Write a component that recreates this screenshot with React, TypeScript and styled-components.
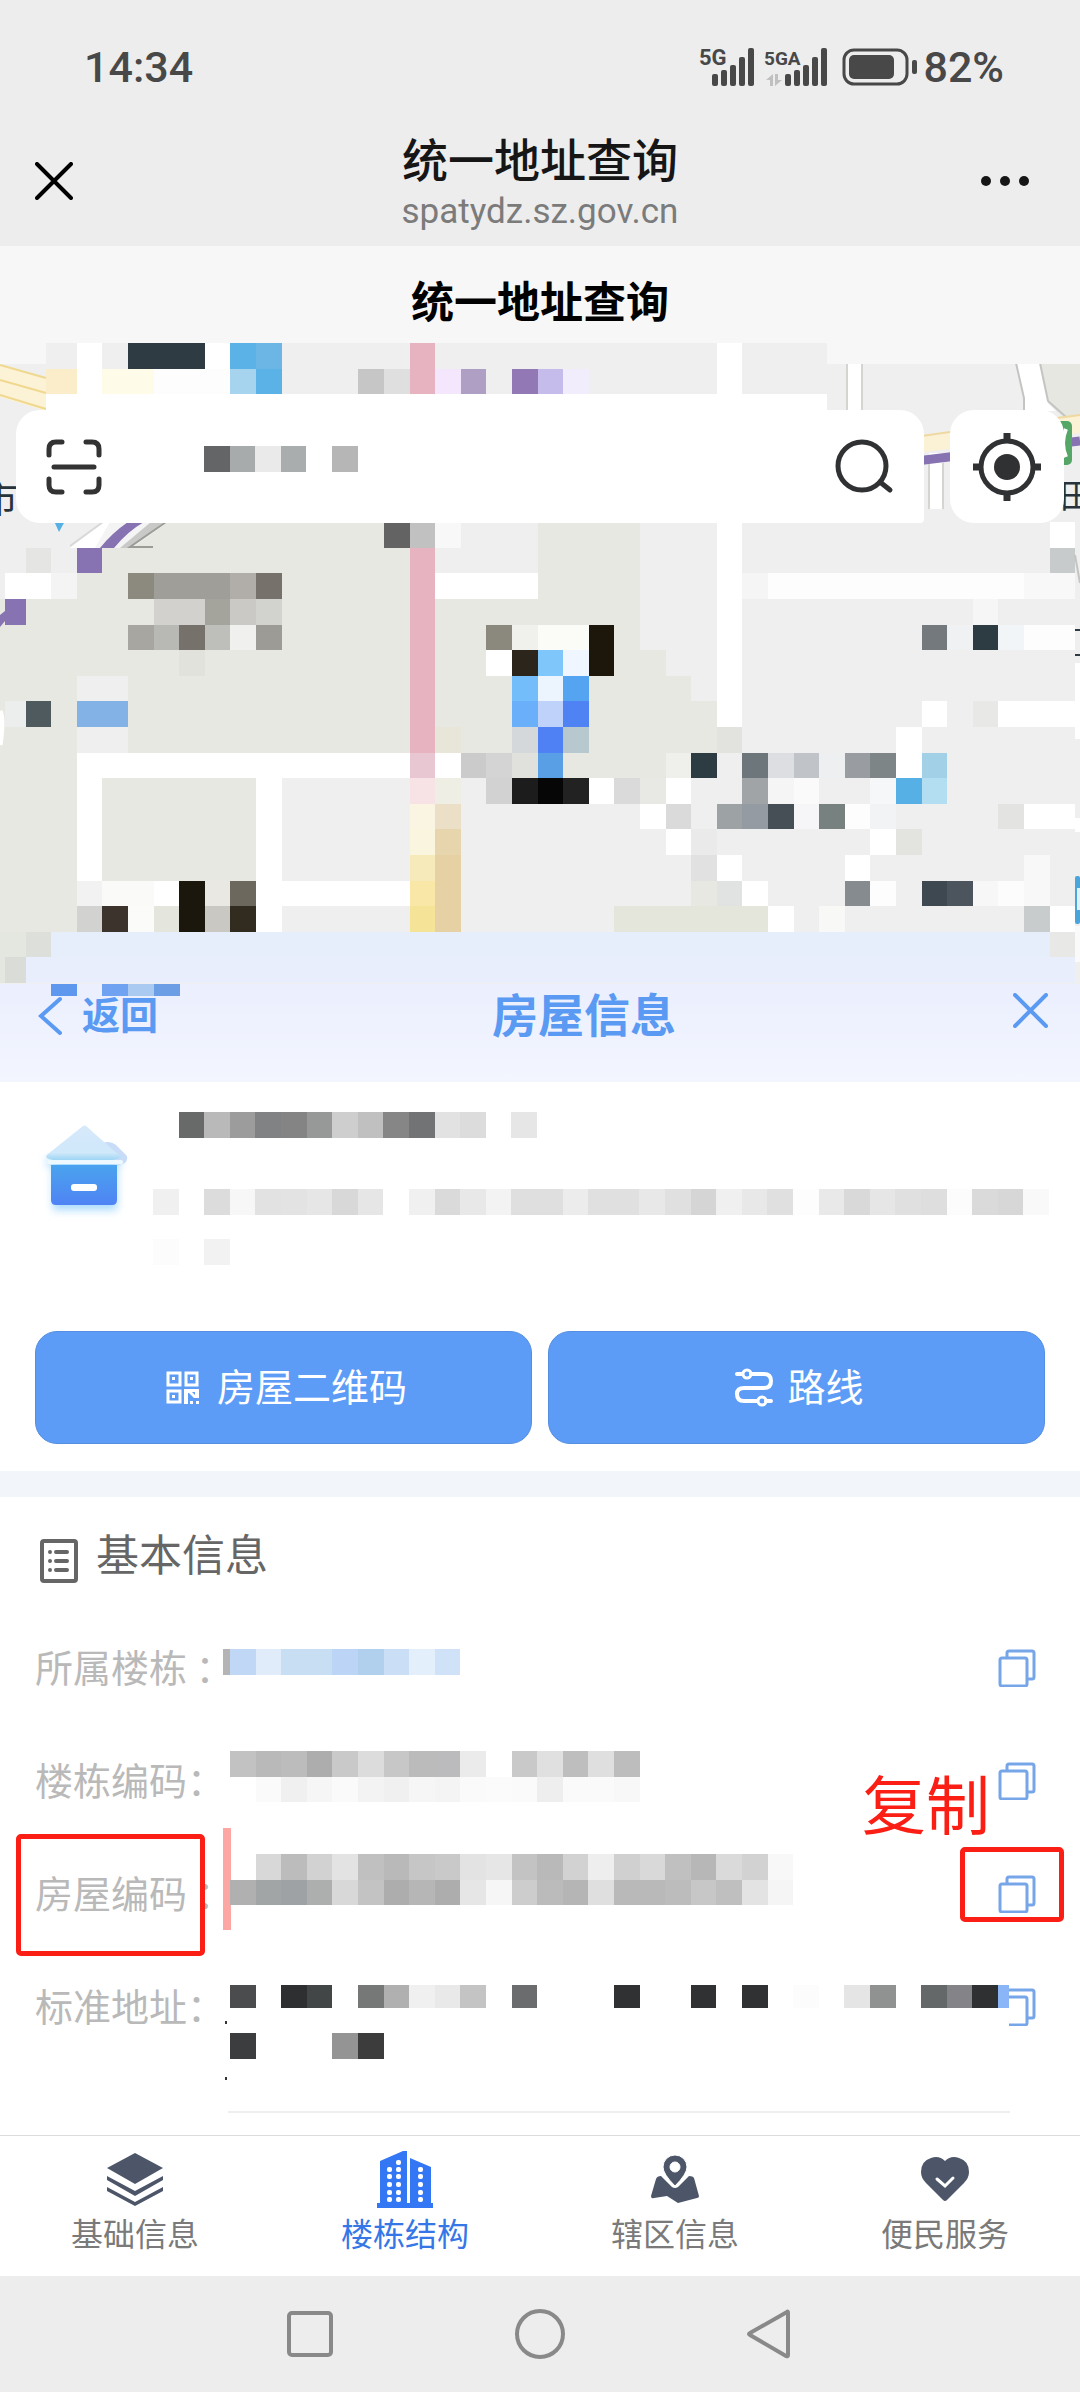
import React from "react";
import styled, { createGlobalStyle } from "styled-components";

const CELL = 25.6;

const GlobalStyle = createGlobalStyle`
  * { box-sizing: border-box; }
  body {
    margin: 0;
    background: #ffffff;
    font-family: "Noto Sans CJK SC", "Noto Sans", sans-serif;
  }
  button { font-family: inherit; padding: 0; border: 0; background: none; cursor: pointer; }
  svg { display: block; }
`;

const Page = styled.div`
  display: flex;
  flex-direction: column;
  min-height: 100vh;
  overflow-x: hidden;
`;

/* ---------- status bar and browser header ---------- */

const StatusBar = styled.div`
  display: flex;
  align-items: center;
  justify-content: space-between;
  height: 134px;
  padding: 0 76px 0 84px;
  background: #ededed;
  color: #484848;
  font: 500 43px/50px Roboto, "Noto Sans", sans-serif;
`;

const StatusRight = styled.div`
  display: flex;
  align-items: center;
  gap: 6px;
`;

const BrowserHeader = styled.header`
  display: flex;
  align-items: flex-start;
  justify-content: space-between;
  height: 112px;
  padding: 0 35px;
  background: #ededed;
`;

const HeaderButton = styled.button`
  display: flex;
  align-items: center;
  width: 66px;
  height: 94px;
`;

const HeaderTitles = styled.div`
  display: flex;
  flex-direction: column;
  align-items: center;
`;

const BrowserTitle = styled.h1`
  margin: 0;
  color: #161616;
  font-size: 46px;
  font-weight: 500;
  line-height: 46px;
`;

const BrowserUrl = styled.span`
  color: #7b7b7b;
  font: 400 35px/64px Roboto, "Noto Sans", sans-serif;
`;

const PageTitle = styled.h2`
  margin: 0;
  padding: 23px 0 14px;
  background: #f7f7f7;
  color: #000000;
  font-size: 43px;
  font-weight: 700;
  line-height: 60px;
  text-align: center;
`;

/* ---------- map ---------- */

const MapStage = styled.section`
  position: relative;
`;

const MapDrawing = styled.svg`
  width: 100%;
  height: auto;
`;

const MapControls = styled.div`
  position: absolute;
  top: 67px;
  left: 16px;
  right: 16px;
  display: flex;
  gap: 26px;
`;

const SearchBox = styled.div`
  display: flex;
  flex: 1;
  align-items: center;
  min-width: 0;
  height: 113px;
  padding: 0 30px;
  border-radius: 24px 24px 4px 24px;
  background: #ffffff;
`;

const SearchValue = styled.div`
  flex-shrink: 0;
  width: 154px;
  height: 42px;
  margin-left: 102px;
`;

const SearchInput = styled.input`
  flex: 1;
  min-width: 0;
  height: 80px;
  border: 0;
  outline: 0;
  background: transparent;
  font-size: 38px;
`;

const LocateButton = styled.button`
  display: flex;
  flex-shrink: 0;
  align-items: center;
  justify-content: center;
  width: 114px;
  height: 113px;
  border-radius: 24px;
  background: #ffffff;
`;

/* ---------- sheet ---------- */

const SheetHead = styled.div`
  position: relative;
  display: flex;
  align-items: flex-start;
  justify-content: space-between;
  height: 98px;
  padding: 0 32px 0 38px;
  background: linear-gradient(#ebeffe, #f3f6ff);
  color: #5b9af2;
`;

const SheetTitle = styled.h3`
  position: absolute;
  left: 0;
  right: 0;
  margin: 0;
  padding-left: 88px;
  font-size: 46px;
  font-weight: 700;
  line-height: 56px;
  text-align: center;
  pointer-events: none;
`;

const BackButton = styled.button`
  display: flex;
  align-items: flex-start;
  gap: 20px;
  color: inherit;
  font-size: 38px;
  font-weight: 700;
  line-height: 58px;
`;

const BackArrow = styled.svg`
  margin-top: 12px;
`;

const CloseButton = styled.button`
  padding: 9px 0;
  color: inherit;
`;

const HeadRemnant = styled.svg`
  position: absolute;
  top: 0;
  left: 51px;
`;

const HouseCard = styled.section`
  padding: 30px 35px 27px;
`;

const HouseSummary = styled.div`
  display: flex;
  gap: 22px;
  padding-bottom: 66px;
`;

const HouseIconBox = styled.div`
  width: 96px;
  padding-top: 4px;
`;

const HouseLines = styled.div`
  flex: 1;
  min-width: 0;
`;

const HouseLine = styled.div<{ $gap: number }>`
  height: 26px;
  margin-top: ${(p) => p.$gap}px;
`;

const Actions = styled.div`
  display: flex;
  gap: 16px;
`;

const ActionButton = styled.button<{ $gap: number }>`
  display: flex;
  flex: 1;
  align-items: center;
  justify-content: center;
  gap: ${(p) => p.$gap}px;
  height: 113px;
  padding-left: 6px;
  border: 1px solid #568fe2;
  border-radius: 22px;
  background: #5c9cf7;
  color: #ffffff;
  font-size: 38px;
  font-weight: 400;
  line-height: 56px;
`;

const ActionLabel = styled.span`
  padding-bottom: 6px;
`;

const Divider = styled.div`
  height: 26px;
  background: #f2f5fa;
`;

/* ---------- basic info ---------- */

const SectionHead = styled.div`
  display: flex;
  align-items: flex-start;
  gap: 18px;
  height: 114px;
  padding: 25px 40px 0;
`;

const SectionIcon = styled.div`
  padding-top: 17px;
`;

const SectionTitle = styled.h3`
  margin: 0;
  color: #666666;
  font-size: 43px;
  font-weight: 400;
  line-height: 60px;
`;

const InfoList = styled.dl`
  margin: 0;
`;

const InfoRow = styled.div<{ $tall?: boolean }>`
  position: relative;
  display: grid;
  grid-template-columns: 188px 1fr 38px;
  min-height: ${(p) => (p.$tall ? 161 : 113)}px;
  padding: 0 44px 0 35px;
`;

const InfoLabel = styled.dt`
  color: #b9b9b9;
  font-size: 38px;
  font-weight: 400;
  line-height: 109px;
  white-space: pre;
`;

const InfoValue = styled.dd<{ $top: number }>`
  z-index: 1;
  min-width: 0;
  margin: 0;
  padding-top: ${(p) => p.$top}px;
`;

const CopyButton = styled.button`
  display: flex;
  align-items: center;
  height: 113px;
`;

const InfoRule = styled.hr`
  margin: 0 70px 22px 228px;
  border: 0;
  border-top: 2px solid #efefef;
`;

const LabelMark = styled.div`
  position: absolute;
  top: -3px;
  left: 16px;
  width: 189px;
  height: 122px;
  border: 5px solid #fa1e14;
  border-radius: 5px;
`;

const CopyMark = styled.div`
  position: absolute;
  top: 10px;
  right: 16px;
  width: 104px;
  height: 75px;
  border: 5px solid #fa1e14;
  border-radius: 5px;
  pointer-events: none;
`;

const CopyNote = styled.span`
  position: absolute;
  top: -76px;
  right: 90px;
  color: #fa1e14;
  font-size: 64px;
  font-weight: 400;
  line-height: 80px;
`;

const PinkMark = styled.div`
  position: absolute;
  top: -9px;
  left: 223px;
  width: 8px;
  height: 102px;
  background: #fca7a3;
`;

/* ---------- bottom bars ---------- */

const TabBar = styled.nav`
  display: flex;
  height: 141px;
  border-top: 1px solid #dcdcdc;
`;

const TabButton = styled.button<{ $active?: boolean }>`
  display: flex;
  flex: 1;
  flex-direction: column;
  align-items: center;
  padding-top: 14px;
  color: ${(p) => (p.$active ? "#3577e6" : "#7a7a7a")};
  font-size: 32px;
  font-weight: 400;
  line-height: 44px;
`;

const TabIcon = styled.svg`
  width: 60px;
  height: 60px;
`;

const SystemNav = styled.nav`
  display: flex;
  flex: 1;
  align-items: center;
  justify-content: center;
  gap: 176px;
  min-height: 116px;
  background: #ededed;
`;

const SystemButton = styled.button`
  width: 54px;
  height: 54px;
`;

/* ---------- mosaics ---------- */

type Line = string[];

const MosaicSvg = styled.svg`
  overflow: visible;
`;

function Mosaic({ lines, lead }: { lines: Line[]; lead?: string }) {
  const cols = Math.max(...lines.map((l) => l.length));
  const start = lead ? 7 : 0;
  return (
    <MosaicSvg
      width={Math.round(cols * CELL) + start}
      height={Math.round(lines.length * CELL)}
      shapeRendering="crispEdges"
      aria-hidden="true"
    >
      {lead && <rect width={7} height={CELL} fill={lead} />}
      {lines.map((line, r) =>
        line.map((c, i) =>
          c === "" ? null : (
            <rect key={`${r}-${i}`} x={start + i * CELL} y={r * CELL} width={CELL} height={CELL} fill={"#" + c} />
          )
        )
      )}
    </MosaicSvg>
  );
}

const split = (s: string): Line => s.split(" ").map((c) => (c === "_" ? "" : c));

const searchLine = split("646566 a7abac eaeaea aaadae _ b6b6b6");
const nameLine = split("_ 686a6a b9b9b9 9c9c9c 808283 848484 979999 cecece c0c0c0 868686 727374 e2e2e2 dcdcdc _ e6e6e6");
const addrLine = split(
  "f0f0f0 _ dcdcdc f7f7f7 e2e2e2 e3e3e3 e6e6e6 d8d8d8 e6e6e6 _ f0f0f0 dadada e8e8e8 f3f3f3 dfdfdf dfdfdf ececec e0e0e0 e0e0e0 e8e8e8 e0e0e0 d5d5d5 f0f0f0 e8e8e8 e0e0e0 fdfdfd e9e9e9 d9d9d9 e6e6e6 e0e0e0 dedede fcfcfc dadada d7d7d7 f9f9f9"
);
const addrLine2 = split("fcfcfc _ f2f2f2");
const buildingLine = split("c0d8f5 e0ecfa c8dff3 c8dff3 bcd5f7 b0d0ee cadff6 e4effc cfe2f7");
const buildingCode = [
  split("c2c2c2 b9b9b9 bcbcbc adadad c9c9c9 dcdcdc c7c7c7 bbbbbb bbbbbd ebebeb _ c9c9c9 e0e0e0 bebebe dfdfdf bdbdbd"),
  split("_ fafafa f0f0f0 f6f6f6 fafafa f3f3f3 f0f0f0 f6f6f6 f4f4f4 fafafa fbfbfb fafafa eeeeee fafafa fafafa f8f8f8"),
];
const houseCode = [
  split("_ d8d8d8 bcbcbc d2d2d2 e3e3e3 c0c0c0 b9b9b9 c6c6c6 c9c9c9 e3e3e3 e6e6e6 c3c3c3 b9b9b9 d2d2d2 eeeeee d0d0d0 d9d9d9 c0c0c0 b7b7b7 dadada d2d2d2 f8f8f8"),
  split("b0b0b0 a1a5a6 9ea2a4 adafaf d8d8d8 c3c3c3 adadad b6b6b6 adadad e6e6e6 f6f6f6 cdcdcd bbbbbb b5b5b5 dfdfdf b9b9b9 b9b9b9 bcbcbc c7c7c7 bfbfbf e3e3e3 f5f5f5"),
];
const stdAddr = split(
  "4a4c4d _ 2e2f30 434647 _ 767878 b0b0b0 f0f0f0 e9e9e9 c4c4c4 _ 6a6c6d _ _ _ 2f3132 _ _ 2f3132 _ 2f3132 _ fcfcfc _ e5e5e5 909292 _ 656868 848488 2f3031"
);
const stdAddr2 = split("3b3d3e _ _ _ 949494 3c3c3d");

function StandardAddress() {
  return (
    <MosaicSvg width={775} height={95} shapeRendering="crispEdges" aria-hidden="true">
      {stdAddr.map((c, i) => c && <rect key={i} x={7 + i * CELL} width={CELL} height={23} fill={"#" + c} />)}
      {stdAddr2.map((c, i) => c && <rect key={i} x={7 + i * CELL} y={48} width={CELL} height={26} fill={"#" + c} />)}
      <rect x={775} y={0} width={11} height={50} fill="#ffffff" />
      <rect x={775} y={0} width={11} height={23} fill="#8ab6f8" />
      <rect x={2} y={36} width={2} height={3} fill="#333333" />
      <rect x={2} y={92} width={2} height={3} fill="#333333" />
    </MosaicSvg>
  );
}

/* ---------- map drawing ---------- */

const GREEN = "e7e8e2";
const GRAY = "efefef";
const W = "ffffff";

/* column, row, columns, rows, colour */
type Block = [number, number, number, number, string];

const blocks: Block[] = [
  [1.8, 0, 30.5, 2, GRAY], [3, 0, 1, 2, W], [5, 0, 3, 1, "2f3b42"], [8, 0, 1, 1, W], [9, 0, 1, 1, "5bb2e6"], [10, 0, 1, 1, "6cb6e6"],
  [1.8, 1, 1.2, 1, "fbedca"], [4, 1, 2, 1, "fefbe9"], [6, 1, 3, 1, "fdfdfd"], [9, 1, 1, 1, "a6d3ed"], [10, 1, 1, 1, "5bb2e6"],
  [14, 1, 1, 1, "c6c6c6"], [15, 1, 1, 1, "dfdfdf"], [16, 0, 1, 2, "e8b3c1"], [17, 1, 1, 1, "f4e7fd"], [18, 1, 1, 1, "af9fc4"],
  [20, 1, 1, 1, "9278b4"], [21, 1, 1, 1, "c6bcec"], [22, 1, 1, 1, "f2edfd"], [28, 0, 1, 2, W], [1.8, 2, 30.5, 2, W],
  [5, 7, 20, 1, GREEN], [4, 8, 21, 1, GREEN], [0, 10, 25, 2, GREEN], [3, 9, 22, 1, GREEN], [0, 12, 26, 1, GREEN],
  [0, 13, 27, 1, GREEN], [0, 14, 28, 2, GREEN], [0, 16, 26, 7, GREEN], [11, 18, 18, 5, GRAY], [18, 17, 7, 1, GRAY], [11, 17, 5, 1, GRAY],
  [17, 7, 4, 2, GRAY], [15, 7, 1, 1, "636363"], [16, 7, 1, 1, "c1c1c1"], [17, 7, 1, 1, "f8f8f8"],
  [1, 8, 1, 1, "e5e5e3"], [3, 8, 1, 1, "8772b2"], [0.2, 9, 1.8, 1, W], [2, 9, 1, 1, "f4f4f4"], [0.2, 10, 0.8, 1, "8772b2"],
  [17, 9, 4, 1, W], [16, 8, 1, 8, "e8b3c1"],
  [5, 9, 1, 1, "8c897f"], [6, 9, 3, 1, "a09e98"], [9, 9, 1, 1, "b1aeaa"], [10, 9, 1, 1, "76716a"],
  [6, 10, 2, 1, "d2d1cd"], [8, 10, 1, 1, "a4a49c"], [9, 10, 1, 1, "cac9c6"], [10, 10, 1, 1, "d2d2ce"],
  [5, 11, 1, 1, "a8a6a1"], [6, 11, 1, 1, "b8b8b4"], [7, 11, 1, 1, "76716a"], [8, 11, 1, 1, "bebeba"], [9, 11, 1, 1, "f0f0ee"], [10, 11, 1, 1, "9d9b95"],
  [19, 11, 1, 1, "8b887d"], [20, 11, 1, 1, "f0f0ec"], [21, 11, 2, 1, "fbfbf7"], [23, 11, 1, 2, "1c160b"],
  [19, 12, 1, 1, W], [20, 12, 1, 1, "2b251b"], [21, 12, 1, 1, "7fc6fa"], [22, 12, 1, 1, "eff6ff"], [7, 12, 1, 1, "e2e2dd"],
  [3, 13, 2, 1, GRAY], [20, 13, 1, 1, "72bdfa"], [21, 13, 1, 1, "ecf5fe"], [22, 13, 1, 1, "55a4f2"],
  [0.2, 14, 0.8, 1, "eceeee"], [1, 14, 1, 1, "4f5a5f"], [3, 14, 2, 1, "82b2e6"], [20, 14, 1, 1, "6aaff9"], [21, 14, 1, 1, "bed2fa"], [22, 14, 1, 1, "4f83f3"],
  [3, 15, 2, 1, GRAY], [17, 15, 1, 1, "e8e6d8"], [20, 15, 1, 1, "d4d8db"], [21, 15, 1, 1, "4f81f5"], [22, 15, 1, 1, "b7c8cf"],
  [3, 16, 15, 1, W], [16, 16, 1, 1, "e8c7d2"], [18, 16, 1, 1, "cbcbcb"], [19, 16, 1, 1, "d4d4d4"], [20, 16, 1, 1, "e0e0dc"], [21, 16, 1, 1, "589fe6"],
  [3, 17, 1, 4, W], [10, 17, 1, 6, W], [16, 17, 1, 1, "f7e3e6"], [17, 17, 1, 1, "eeeee4"], [19, 17, 1, 1, "d2d2d2"], [20, 17, 1, 1, "1c1c1c"],
  [21, 17, 1, 1, "060606"], [22, 17, 1, 1, "222222"], [23, 17, 1, 1, W], [24, 17, 1, 1, "dadada"],
  [16, 18, 1, 1, "faf4e2"], [17, 18, 1, 1, "ebdfc7"], [16, 19, 1, 1, "faf5de"], [17, 19, 1, 1, "e6d5ad"], [16, 20, 1, 1, "f6eaba"],
  [17, 20, 1, 3, "e6d1a4"], [16, 21, 1, 1, "f8e7a7"], [16, 22, 1, 1, "f5e397"],
  [3, 21, 1, 1, "f2f2f2"], [4, 21, 2, 1, "fafaf8"], [6, 21, 1, 1, W], [7, 21, 1, 2, "1c170c"], [8, 21, 1, 1, "e9e8e3"], [9, 21, 1, 1, "6c685e"], [10, 21, 6, 1, W],
  [3, 22, 1, 1, "d2d2d0"], [4, 22, 1, 1, "3c342c"], [5, 22, 1, 1, "fbfbf9"], [6, 22, 1, 1, "e4e5dc"], [8, 22, 1, 1, "cac8c2"], [9, 22, 1, 1, "312b20"],
  [28, 7, 1, 8, W], [41, 7, 1, 1, W], [41, 8, 1, 1, "c8cbcb"], [29, 9, 1, 1, "f5f5f5"], [30, 9, 10, 1, "fdfdfd"], [40, 9, 2, 1, "f8f8f8"],
  [38, 10, 1, 1, "f6f6f6"], [36, 11, 1, 1, "74797d"], [37, 11, 1, 1, "f0f1f2"], [38, 11, 1, 1, "2d3b43"], [39, 11, 1, 1, "f2f5f7"], [40, 11, 2, 1, "fdfdfd"],
  [36, 14, 1, 1, W], [38, 14, 1, 1, "e8e8e6"], [39, 14, 3, 1, W], [35, 15, 1, 2, W], [28, 15, 1, 1, "e2e2de"],
  [26, 16, 1, 1, "efefec"], [27, 16, 1, 1, "2d3b42"], [29, 16, 1, 1, "6d767b"], [30, 16, 1, 1, "dcdee1"], [31, 16, 1, 1, "c0c4c8"], [32, 16, 1, 1, "eeeff0"],
  [33, 16, 1, 1, "999da1"], [34, 16, 1, 1, "7e8586"], [36, 16, 1, 1, "a2d0e7"],
  [25, 17, 1, 1, "e8e8e4"], [26, 17, 1, 1, W], [29, 17, 1, 1, "a0a4a7"], [30, 17, 1, 1, "f5f5f5"], [31, 17, 1, 1, "fafafa"], [34, 17, 1, 1, "f6f7f8"],
  [35, 17, 1, 1, "56b0e5"], [36, 17, 1, 1, "b3def1"],
  [25, 18, 1, 1, W], [26, 18, 1, 1, "dadada"], [28, 18, 1, 1, "9da3a5"], [29, 18, 1, 1, "949ba2"], [30, 18, 1, 1, "464f55"], [31, 18, 1, 1, "f6f6f8"],
  [32, 18, 1, 1, "778180"], [33, 18, 1, 1, "fdfdfd"], [34, 18, 1, 1, "f1f3f5"], [39, 18, 1, 1, "e3e4e1"], [40, 18, 2, 1, W],
  [26, 19, 1, 1, W], [27, 19, 1, 1, "eaeaea"], [34, 19, 1, 1, W], [35, 19, 1, 1, "e3e3e0"], [27, 20, 1, 1, "e1e1e1"], [28, 20, 1, 1, W], [33, 20, 1, 1, W], [40, 20, 1, 2, "f8f8f8"],
  [27, 21, 1, 1, "e8e8e3"], [28, 21, 1, 1, "e1e3e2"], [29, 21, 1, 1, W], [33, 21, 1, 1, "858b8e"], [34, 21, 1, 1, "fdfdfd"], [36, 21, 1, 1, "3e4850"], [37, 21, 1, 1, "4c555d"],
  [38, 21, 1, 1, "f7f7f7"], [39, 21, 1, 1, "fcfcfc"],
  [24, 22, 6, 1, "e4e5db"], [30, 22, 1, 1, W], [32, 22, 1, 1, "f8f8f6"], [40, 22, 1, 1, "c9cccc"], [41, 22, 1, 1, W],
  [0, 23, 1, 2, "e4e6e0"], [1, 23, 1, 1, "dcdfda"], [0.2, 24, 0.8, 1, "dadcd8"], [2, 23, 39, 1, "e6edfb"], [41, 23, 1, 1, "e8e9e7"], [1, 24, 41, 1, "e9eefd"],
];

function CityMap() {
  return (
    <MapDrawing viewBox="0 0 1080 641" role="img" aria-label="地图">
      <rect width={1080} height={641} fill="#efefef" />
      {/* top left road */}
      <path d="M0 21 L46 35 V68 L0 54Z" fill="#fcf2d6" />
      <path d="M0 22 L46 35 M0 37 L46 50 M0 52 L46 66" stroke="#f0d88f" strokeWidth={2} fill="none" />
      {/* streets at the top right */}
      <path d="M847 20H862V70H847Z M929 110H943V166H929Z" fill="#ffffff" />
      <path d="M847 20V70 M862 20V70 M929 120V166 M943 120V166" stroke="#d4d4d0" strokeWidth={2} />
      <path d="M1040 20 L1048 62 L1064 74 H1080 V20Z" fill="#e6e7e1" />
      <path d="M1016 20 L1024 55 V68 H1056 L1048 60 L1040 20Z" fill="#ffffff" />
      <path d="M1016 20 L1024 55 V68 M1040 20 L1048 58 L1066 74" stroke="#c4c4c2" strokeWidth={2} fill="none" />
      <path d="M900 97 L950 90 L1080 72 V90 L900 112Z" fill="#fbf1d5" />
      <path d="M900 96 L950 89 L1080 72" stroke="#efd9a0" strokeWidth={2} fill="none" />
      <path d="M900 120 L1080 98" stroke="#8772b2" strokeWidth={9} fill="none" />
      <rect x={1046} y={78} width={26} height={44} rx={5} fill="#56a667" />
      <path d="M1066 86 Q1060 100 1066 114" stroke="#ffffff" strokeWidth={4} fill="none" />
      <g shapeRendering="crispEdges">
        <rect width={46} height={21} fill="#f7f7f7" />
        <rect x={827} width={253} height={21} fill="#f7f7f7" />
      </g>
      <text x={-19} y={170} fontSize={37} fill="#26333b">市</text>
      <text x={1060} y={165} fontSize={33} fill="#26333b">田</text>
      <path d="M54 178 H65 L59 189Z" fill="#55b0e4" />
      <g shapeRendering="crispEdges">
        {blocks.map(([c, r, w, h, fill], i) => (
          <rect key={i} x={c * CELL} y={r * CELL} width={w * CELL} height={h * CELL} fill={"#" + fill} />
        ))}
      </g>
      {/* elevated line below the search box */}
      <path d="M103 179 H128 L100 205 H70Z" fill="#ffffff" />
      <path d="M110 179 H168 L132 205 H95Z" fill="#f4f4f4" />
      <path d="M128 179 H144 Q128 188 114 205 H100 Q112 190 128 179Z" fill="#8772b2" />
      <path d="M151 179 H164 L130 205 H120Z" fill="#c9c9c7" />
      <path d="M166 179 L130 204 H153" stroke="#9b9b98" strokeWidth={2} fill="none" />
      <path d="M103 179 L70 203" stroke="#d8d8d8" strokeWidth={2} />
      <path d="M0 272 L5 268 V278 L0 284Z" fill="#8772b2" />
      {/* strip at the screen edges */}
      <path d="M1075 212 L1080 240" stroke="#c4c4c2" strokeWidth={2} />
      <path d="M1075 287 H1080 M1075 312 H1080" stroke="#2d3b43" strokeWidth={2} />
      <rect x={1075} y={320} width={5} height={76} fill="#ffffff" />
      <rect x={1075} y={475} width={5} height={14} fill="#ffffff" />
      <rect x={1075} y={533} width={5} height={48} rx={2} fill="#4ba5d8" />
      <rect x={1077} y={545} width={3} height={22} fill="#dff1fa" />
      <rect x={1075} y={583} width={5} height={36} fill="#fafafa" />
      <path d="M0 368 Q4 376 0 402" stroke="#ffffff" strokeWidth={5} fill="none" />
    </MapDrawing>
  );
}

/* ---------- icons ---------- */

const SignalIcon = () => (
  <svg width={218} height={42} fill="#484848" aria-hidden="true">
    <text x={0} y={19} fontFamily="Roboto" fontWeight={700} fontSize={22}>5G</text>
    <text x={65} y={19} fontFamily="Roboto" fontWeight={700} fontSize={19}>5GA</text>
    {[0, 1, 2, 3, 4].map((i) => {
      const h = [12, 16, 21, 29, 38][i];
      return (
        <g key={i}>
          <rect x={13 + i * 9} y={40 - h} width={6} height={h} rx={2} />
          <rect x={86 + i * 9} y={40 - h} width={6} height={h} rx={2} />
        </g>
      );
    })}
    <path d="M67 34 L74 28 V40 H71 V34Z M76 28 H79 V34 H83 L76 40Z" fill="#c0c0c0" />
    <rect x={145} y={4} width={63} height={34} rx={10} fill="none" stroke="#484848" strokeWidth={3} />
    <rect x={150} y={9} width={45} height={24} rx={5} />
    <rect x={213} y={14} width={5} height={14} rx={2} />
  </svg>
);

const CrossIcon = ({ size, width }: { size: number; width: number }) => (
  <svg width={size} height={size} viewBox={`0 0 ${size} ${size}`} fill="none" stroke="currentColor" strokeWidth={width} strokeLinecap="round">
    <path d={`M2 2 L${size - 2} ${size - 2} M${size - 2} 2 L2 ${size - 2}`} />
  </svg>
);

const DotsIcon = () => (
  <svg width={60} height={12} fill="#161616">
    <circle cx={7} cy={6} r={5} />
    <circle cx={26} cy={6} r={5} />
    <circle cx={45} cy={6} r={5} />
  </svg>
);

const ScanIcon = () => (
  <svg width={56} height={56} fill="none" stroke="#333333" strokeWidth={5} strokeLinecap="round">
    <path d="M3 16V10Q3 3 10 3H16 M40 3H46Q53 3 53 10V16 M53 40V46Q53 53 46 53H40 M16 53H10Q3 53 3 46V40 M8 28H48" />
  </svg>
);

const SearchIcon = () => (
  <svg width={60} height={56} fill="none" stroke="#303133" strokeWidth={5} strokeLinecap="round">
    <circle cx={28} cy={27} r={24} />
    <path d="M46 43 L56 51" />
  </svg>
);

const LocateIcon = () => (
  <svg width={70} height={70} fill="none" stroke="#303133" strokeWidth={5}>
    <circle cx={35} cy={35} r={26} />
    <circle cx={35} cy={35} r={13} fill="#303133" stroke="none" />
    <path d="M35 1V10 M35 60V69 M1 35H10 M60 35H69" strokeWidth={7} />
  </svg>
);

const HouseIcon = () => (
  <svg width={96} height={104} viewBox="0 0 96 104">
    <defs>
      <linearGradient id="houseBody" x1="0" y1="0" x2="0" y2="1">
        <stop offset="0" stopColor="#4aa3ee" />
        <stop offset="1" stopColor="#4f83f4" />
      </linearGradient>
      <linearGradient id="houseRoof" x1="0" y1="0" x2="0" y2="1">
        <stop offset="0" stopColor="#d6e9fb" />
        <stop offset="0.75" stopColor="#cfe8fa" />
        <stop offset="1" stopColor="#8ed0f2" />
      </linearGradient>
      <filter id="houseGlow" x="-30%" y="-30%" width="160%" height="160%">
        <feGaussianBlur stdDeviation="4" />
      </filter>
    </defs>
    <path d="M12 42 H86 V50 H82 V94 H18 V50 H12Z" fill="#a9dafc" filter="url(#houseGlow)" />
    <path d="M72 26 Q78 26 82 30 L91 39 Q94 42 90 47 L84 49 L60 28Z" fill="#c8dcf7" />
    <path d="M48 10 Q49 9 51 10 L86 41 Q78 46 49 46 Q20 46 12 42 Q10 40 13 38Z" fill="url(#houseRoof)" />
    <path d="M16 49 H82 V84 Q82 89 77 89 H21 Q16 89 16 84Z" fill="url(#houseBody)" />
    <rect x={12} y={44} width={76} height={4} rx={2} fill="#eef8ff" />
    <rect x={36} y={68} width={26} height={7} rx={3} fill="#ffffff" />
  </svg>
);

const QrIcon = () => (
  <svg width={33} height={33} fill="none" stroke="#ffffff" strokeWidth={3}>
    <path d="M2 2H14V14H2Z M20 2H31V14H20Z M2 20H14V31H2Z" />
    <path d="M6 6H9V9H6Z M24 6H27V9H24Z M6 24H9V27H6Z M18 18H33V21H26L29 24V18H33V27H28L23 22H22V33H18Z M24 30H27V33H24Z M30 30H33V33H30Z" fill="#ffffff" stroke="none" />
  </svg>
);

const RouteIcon = () => (
  <svg width={38} height={39} fill="none" stroke="#ffffff" strokeWidth={4} strokeLinecap="round">
    <path d="M2 6H7 M16 6H29Q36 6 36 13Q36 20 29 20H9Q2 20 2 26Q2 33 9 33H22 M31 33H36" />
    <circle cx={12} cy={6} r={4} strokeWidth={3} />
    <circle cx={27} cy={33} r={4} strokeWidth={3} />
  </svg>
);

const ListIcon = () => (
  <svg width={38} height={44} fill="none" stroke="#666666" strokeWidth={4} strokeLinecap="round">
    <rect x={2} y={2} width={34} height={40} rx={2} />
    <path d="M16 13H27 M16 22H27 M16 31H27 M10 13H10 M10 22H10 M10 31H10" />
  </svg>
);

const CopyIcon = () => (
  <svg width={38} height={38} fill="none" stroke="#76a5e8" strokeWidth={3}>
    <rect x={2} y={9} width={27} height={28} rx={2} />
    <path d="M9 8V4Q9 2 11 2H34Q36 2 36 4V28Q36 30 34 30H30" />
  </svg>
);

const SLATE = "#4d5668";

const tabs = [
  {
    label: "基础信息",
    icon: (
      <>
        <path d="M30 3 L58 18 L30 34 L2 18Z" fill={SLATE} />
        <path d="M2 26 L30 41 L58 26 V30 L30 46 L2 30Z M2 37 L30 52 L58 37 V41 L30 56 L2 41Z" fill={SLATE} />
      </>
    ),
  },
  {
    label: "楼栋结构",
    active: true,
    icon: (
      <g fill="#3377f4">
        <path d="M5 54 V11 L28 1 H32 V54Z M35 54 V8 L56 17 V54Z M2 53 H58 V58 H2Z" />
        <g fill="#ffffff">
          {[19, 26, 34, 42, 49].map((y) => (
            <g key={y}>
              <rect x={12} y={y - 2} width={5} height={5} rx={2} />
              <rect x={21} y={y - 2} width={5} height={5} rx={2} />
              <rect x={43} y={y - 2} width={5} height={5} rx={2} />
            </g>
          ))}
          <rect x={21} y={10} width={5} height={5} rx={2} />
        </g>
      </g>
    ),
  },
  {
    label: "辖区信息",
    icon: (
      <g fill={SLATE}>
        <path d="M16 26 Q12 26 11 29 L6 46 Q6 49 9 48 L22 46 L33 53 L52 48 Q54 48 54 46 L49 28 Q48 26 44 26 L33 37 Q30 39 27 37Z" />
        <path fillRule="evenodd" d="M30 5 A12 12 0 0 1 42 17 Q42 24 30 36 Q18 24 18 17 A12 12 0 0 1 30 5Z M30 12 A5 5 0 1 0 30 22 A5 5 0 1 0 30 12Z" stroke="#ffffff" strokeWidth={1} />
      </g>
    ),
  },
  {
    label: "便民服务",
    icon: (
      <>
        <path d="M30 11 Q36 5 44 8 Q54 11 54 22 Q54 28 49 33 L32 50 Q30 52 28 50 L11 33 Q6 28 6 22 Q6 11 16 8 Q24 5 30 11Z" fill={SLATE} />
        <path d="M22 29 L30 36 L38 28" fill="none" stroke="#ffffff" strokeWidth={3} strokeLinecap="round" />
      </>
    ),
  },
];

/* ---------- rows ---------- */

interface RowProps {
  label: string;
  top: number;
  tall?: boolean;
  value: React.ReactNode;
  children?: React.ReactNode;
}

function Row({ label, top, tall, value, children }: RowProps) {
  return (
    <InfoRow $tall={tall}>
      <InfoLabel>{label}</InfoLabel>
      <InfoValue $top={top}>{value}</InfoValue>
      <CopyButton aria-label={"复制" + label.slice(0, 4)}>
        <CopyIcon />
      </CopyButton>
      {children}
    </InfoRow>
  );
}

export default function App() {
  return (
    <Page>
      <GlobalStyle />
      <StatusBar>
        <span>14:34</span>
        <StatusRight>
          <SignalIcon />
          <span>82%</span>
        </StatusRight>
      </StatusBar>
      <BrowserHeader>
        <HeaderButton aria-label="关闭网页">
          <CrossIcon size={38} width={4} />
        </HeaderButton>
        <HeaderTitles>
          <BrowserTitle>统一地址查询</BrowserTitle>
          <BrowserUrl>spatydz.sz.gov.cn</BrowserUrl>
        </HeaderTitles>
        <HeaderButton aria-label="更多">
          <DotsIcon />
        </HeaderButton>
      </BrowserHeader>
      <PageTitle>统一地址查询</PageTitle>

      <MapStage>
        <CityMap />
        <MapControls>
          <SearchBox>
            <ScanIcon />
            <SearchValue>
              <Mosaic lines={[searchLine]} />
            </SearchValue>
            <SearchInput type="search" aria-label="搜索地址" />
            <button aria-label="搜索">
              <SearchIcon />
            </button>
          </SearchBox>
          <LocateButton aria-label="定位">
            <LocateIcon />
          </LocateButton>
        </MapControls>
      </MapStage>

      <SheetHead>
        <HeadRemnant width={130} height={12} aria-hidden="true">
          <rect width={26} height={12} fill="#5e97ee" />
          <rect x={51} width={26} height={12} fill="#6fa2f0" />
          <rect x={77} width={26} height={12} fill="#aacaf2" />
          <rect x={103} width={26} height={12} fill="#6c9ee6" />
        </HeadRemnant>
        <BackButton>
          <BackArrow width={24} height={40} fill="none" stroke="currentColor" strokeWidth={4} strokeLinecap="round">
            <path d="M22 3 L3 20 L22 37" />
          </BackArrow>
          返回
        </BackButton>
        <SheetTitle>房屋信息</SheetTitle>
        <CloseButton aria-label="关闭">
          <CrossIcon size={35} width={4} />
        </CloseButton>
      </SheetHead>

      <HouseCard>
        <HouseSummary>
          <HouseIconBox>
            <HouseIcon />
          </HouseIconBox>
          <HouseLines>
            <HouseLine $gap={0}>
              <Mosaic lines={[nameLine]} />
            </HouseLine>
            <HouseLine $gap={51}>
              <Mosaic lines={[addrLine]} />
            </HouseLine>
            <HouseLine $gap={24}>
              <Mosaic lines={[addrLine2]} />
            </HouseLine>
          </HouseLines>
        </HouseSummary>
        <Actions>
          <ActionButton $gap={18}>
            <QrIcon />
            <ActionLabel>房屋二维码</ActionLabel>
          </ActionButton>
          <ActionButton $gap={14}>
            <RouteIcon />
            <ActionLabel>路线</ActionLabel>
          </ActionButton>
        </Actions>
      </HouseCard>
      <Divider />

      <section>
        <SectionHead>
          <SectionIcon>
            <ListIcon />
          </SectionIcon>
          <SectionTitle>基本信息</SectionTitle>
        </SectionHead>
        <InfoList>
          <Row label="所属楼栋 ：" top={38} value={<Mosaic lead="#b4b4b4" lines={[buildingLine]} />} />
          <Row label="楼栋编码：" top={27} value={<Mosaic lead="none" lines={buildingCode} />} />
          <Row label="房屋编码 ：" top={17} value={<Mosaic lead="none" lines={houseCode} />}>
            <PinkMark />
            <LabelMark />
            <CopyMark />
            <CopyNote>复制</CopyNote>
          </Row>
          <Row label="标准地址：" top={35} tall value={<StandardAddress />} />
        </InfoList>
        <InfoRule />
      </section>

      <TabBar>
        {tabs.map((t) => (
          <TabButton key={t.label} $active={t.active}>
            <TabIcon viewBox="0 0 60 60" aria-hidden="true">
              {t.icon}
            </TabIcon>
            {t.label}
          </TabButton>
        ))}
      </TabBar>
      <SystemNav>
        <SystemButton aria-label="最近任务">
          <svg width={54} height={54} fill="none" stroke="#898989" strokeWidth={4}>
            <rect x={6} y={6} width={42} height={42} rx={3} />
          </svg>
        </SystemButton>
        <SystemButton aria-label="主页">
          <svg width={54} height={54} fill="none" stroke="#898989" strokeWidth={4}>
            <circle cx={27} cy={27} r={23} />
          </svg>
        </SystemButton>
        <SystemButton aria-label="返回上一页">
          <svg width={54} height={54} fill="none" stroke="#898989" strokeWidth={4} strokeLinejoin="round">
            <path d="M44 5 Q45 4 45 6 V48 Q45 50 43 49 L7 28 Q5 27 7 26Z" />
          </svg>
        </SystemButton>
      </SystemNav>
    </Page>
  );
}
